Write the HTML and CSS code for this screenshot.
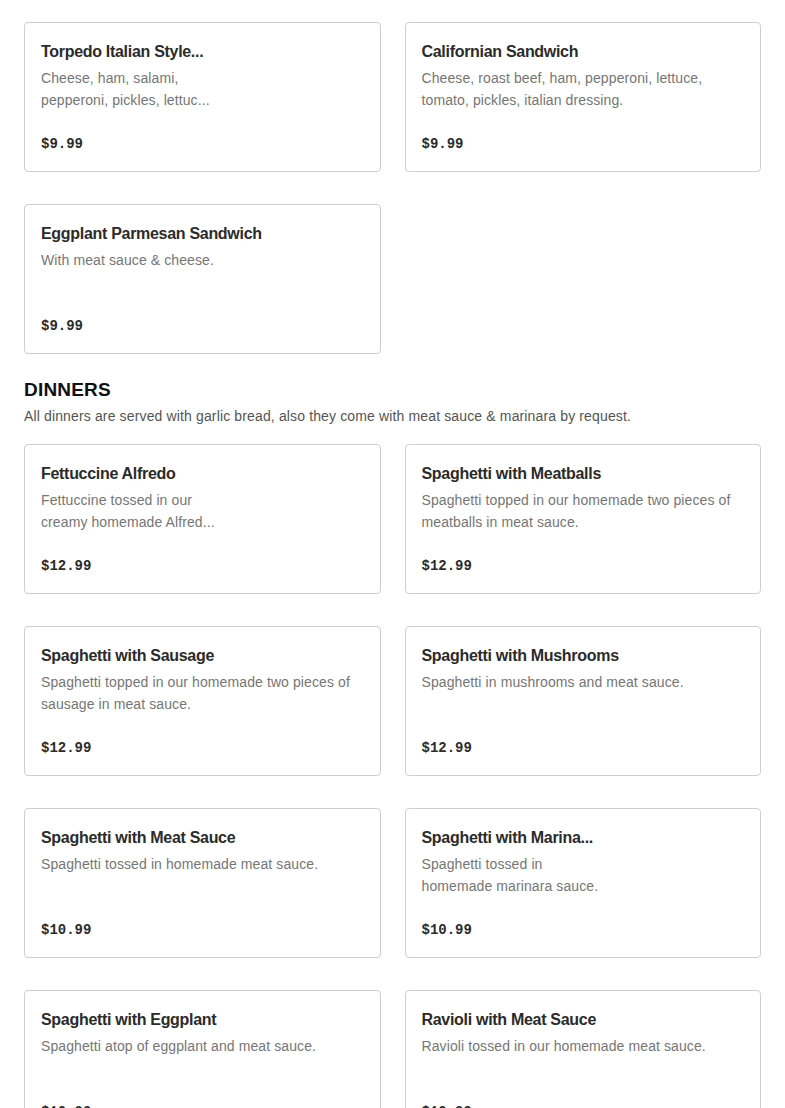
FILE: index.html
```html
<!DOCTYPE html>
<html lang="en">
<head>
<meta charset="utf-8">
<title>Menu</title>
<link rel="stylesheet" href="styles.css">
</head>
<body>
<main class="menu">
  <section class="section">
    <div class="grid">
      <article class="card">
        <h3 class="card-title narrow">Torpedo Italian Style...</h3>
        <p class="card-desc narrow">Cheese, ham, salami, pepperoni, pickles, lettuc...</p>
        <div class="card-price">$9.99</div>
      </article>
      <article class="card">
        <h3 class="card-title">Californian Sandwich</h3>
        <p class="card-desc">Cheese, roast beef, ham, pepperoni, lettuce, tomato, pickles, italian dressing.</p>
        <div class="card-price">$9.99</div>
      </article>
      <article class="card">
        <h3 class="card-title">Eggplant Parmesan Sandwich</h3>
        <p class="card-desc">With meat sauce &amp; cheese.</p>
        <div class="card-price">$9.99</div>
      </article>
    </div>
  </section>

  <section class="section">
    <h2 class="section-title">DINNERS</h2>
    <p class="section-sub">All dinners are served with garlic bread, also they come with meat sauce &amp; marinara by request.</p>
    <div class="grid">
      <article class="card">
        <h3 class="card-title">Fettuccine Alfredo</h3>
        <p class="card-desc narrow">Fettuccine tossed in our creamy homemade Alfred...</p>
        <div class="card-price">$12.99</div>
      </article>
      <article class="card">
        <h3 class="card-title">Spaghetti with Meatballs</h3>
        <p class="card-desc">Spaghetti topped in our homemade two pieces of meatballs in meat sauce.</p>
        <div class="card-price">$12.99</div>
      </article>
      <article class="card">
        <h3 class="card-title">Spaghetti with Sausage</h3>
        <p class="card-desc">Spaghetti topped in our homemade two pieces of sausage in meat sauce.</p>
        <div class="card-price">$12.99</div>
      </article>
      <article class="card">
        <h3 class="card-title">Spaghetti with Mushrooms</h3>
        <p class="card-desc">Spaghetti in mushrooms and meat sauce.</p>
        <div class="card-price">$12.99</div>
      </article>
      <article class="card">
        <h3 class="card-title">Spaghetti with Meat Sauce</h3>
        <p class="card-desc">Spaghetti tossed in homemade meat sauce.</p>
        <div class="card-price">$10.99</div>
      </article>
      <article class="card">
        <h3 class="card-title narrow">Spaghetti with Marina...</h3>
        <p class="card-desc narrow">Spaghetti tossed in homemade marinara sauce.</p>
        <div class="card-price">$10.99</div>
      </article>
      <article class="card">
        <h3 class="card-title">Spaghetti with Eggplant</h3>
        <p class="card-desc">Spaghetti atop of eggplant and meat sauce.</p>
        <div class="card-price">$10.99</div>
      </article>
      <article class="card">
        <h3 class="card-title">Ravioli with Meat Sauce</h3>
        <p class="card-desc">Ravioli tossed in our homemade meat sauce.</p>
        <div class="card-price">$10.99</div>
      </article>
    </div>
  </section>
</main>
</body>
</html>
```

FILE: styles.css
```css
* { box-sizing: border-box; }

html, body {
  margin: 0;
  padding: 0;
  background: #ffffff;
}

body {
  font-family: "Liberation Sans", Arial, sans-serif;
  color: #2b2b2b;
}

.menu {
  padding: 22px 24px 0;
}

.section + .section {
  margin-top: 24px;
}

.section-title {
  margin: 0;
  font-family: "Liberation Sans", Arial, sans-serif;
  font-weight: 900;
  font-size: 19px;
  line-height: 24px;
  letter-spacing: 0.2px;
  color: #111111;
}

.section-sub {
  margin: 3px 0 17px;
  font-size: 14px;
  line-height: 22px;
  letter-spacing: 0.14px;
  color: #545454;
}

.grid {
  display: grid;
  grid-template-columns: 1fr 1fr;
  column-gap: 24px;
  row-gap: 32px;
}

.card {
  border: 1px solid #cfcfcf;
  border-radius: 4px;
  padding: 16px;
  height: 150px;
  display: flex;
  flex-direction: column;
  overflow: hidden;
}

.card-title {
  margin: 1px 0 3px;
  font-size: 16px;
  line-height: 24px;
  font-weight: 600;
  letter-spacing: -0.3px;
  color: #2b2b2b;
  white-space: nowrap;
  overflow: hidden;
}

.card-desc {
  margin: 0;
  font-size: 14px;
  line-height: 22px;
  letter-spacing: 0.1px;
  color: #767676;
  min-height: 44px;
}

.narrow {
  max-width: 190px;
}

.card-price {
  margin-top: 22px;
  font-family: "Liberation Mono", "Courier New", monospace;
  font-weight: 700;
  font-size: 14px;
  line-height: 22px;
  color: #2b2b2b;
}
```
